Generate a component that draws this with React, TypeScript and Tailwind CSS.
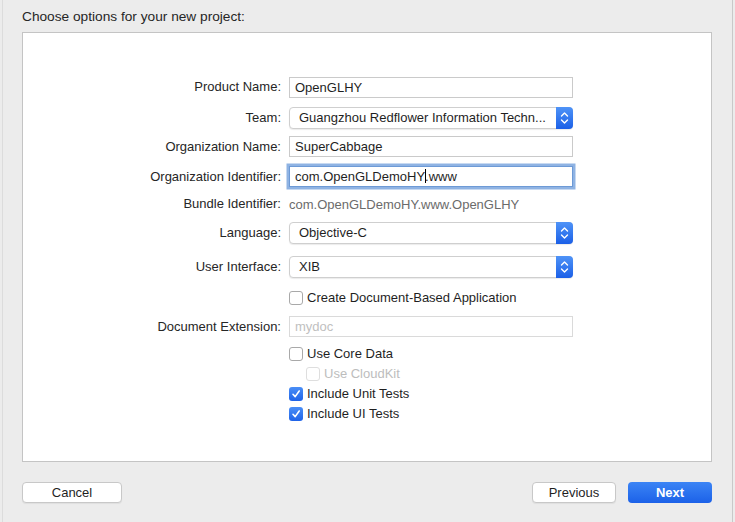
const labelCls = "w-[266px] shrink-0 pr-[8px] text-right text-[13px] text-[#262626]";

function Stepper() {
  return (
    <div className="flex h-full w-[17px] items-center justify-center rounded-r-[4px] bg-gradient-to-b from-[#4f93f7] to-[#1b5fe7]">
      <svg width="9" height="14" viewBox="0 0 9 14" fill="none">
        <path d="M1.5 5 L4.5 2 L7.5 5" stroke="white" strokeWidth="1.4" strokeLinecap="round" strokeLinejoin="round" />
        <path d="M1.5 9 L4.5 12 L7.5 9" stroke="white" strokeWidth="1.4" strokeLinecap="round" strokeLinejoin="round" />
      </svg>
    </div>
  );
}

function Popup({ value }: { value: string }) {
  return (
    <div className="flex h-[22px] w-[284px] items-center rounded-[4px] border border-[#cfcfcf] bg-white shadow-[0_1px_1px_rgba(0,0,0,0.08)]">
      <span className="flex-1 truncate pl-[9px] text-[13px] text-[#1f1f1f]">{value}</span>
      <div className="-mr-px -my-px h-[22px]">
        <Stepper />
      </div>
    </div>
  );
}

function Field({ value, placeholder, focused }: { value?: string; placeholder?: string; focused?: boolean }) {
  return (
    <div
      className={
        "flex h-[21px] w-[284px] items-center border bg-white pl-[5px] text-[13px] " +
        (focused
          ? "border-[#6d9ad6] ring-[2.5px] ring-[#8fb3e3] text-[#1f1f1f]"
          : placeholder
            ? "border-[#dadada] text-[#c0c0c0]"
            : "border-[#cacaca] text-[#1f1f1f]")
      }
    >
      {focused ? (
        <span>
          com.OpenGLDemoHY<span className="-mr-px inline-block h-[14px] w-0 border-l border-black align-[-2px]" />.www
        </span>
      ) : (
        value ?? placeholder
      )}
    </div>
  );
}

function Check({ label, checked, disabled, indent }: { label: string; checked?: boolean; disabled?: boolean; indent?: boolean }) {
  return (
    <div className={"flex h-[20px] items-center gap-[4px] " + (indent ? "pl-[17px]" : "")}>
      {checked ? (
        <div className="flex h-[14px] w-[14px] items-center justify-center rounded-[3px] bg-gradient-to-b from-[#4a8ef6] to-[#1f63e8]">
          <svg width="10" height="10" viewBox="0 0 10 10" fill="none">
            <path d="M2 5.3 L4.2 7.6 L8.2 2" stroke="white" strokeWidth="1.6" strokeLinecap="round" strokeLinejoin="round" />
          </svg>
        </div>
      ) : (
        <div
          className={
            "h-[14px] w-[14px] rounded-[3px] border bg-white " +
            (disabled ? "border-[#dedede]" : "border-[#a9a9a9]")
          }
        />
      )}
      <span className={"text-[13px] " + (disabled ? "text-[#bdbdbd]" : "text-[#1f1f1f]")}>{label}</span>
    </div>
  );
}

function Row({ label, children, className }: { label?: string; children: React.ReactNode; className: string }) {
  return (
    <div className={"flex " + className}>
      <div className={labelCls}>{label ? label + ":" : ""}</div>
      <div>{children}</div>
    </div>
  );
}

export default function App() {
  return (
    <div className="h-[522px] w-[735px] bg-[#ececec] font-['Liberation_Sans',Arial,sans-serif]">
      <div className="ml-[2px] h-full w-[731px] border-x border-l-[#dcdcdc] border-r-[#c9c9c9] pl-[19px]">
        <div className="pt-[9px] text-[13.7px] leading-[16px] text-[#262626]">Choose options for your new project:</div>
        <div className="mt-[7px] h-[430px] w-[690px] border border-[#c4c4c4] bg-white pt-[44px]">
          <Row label="Product Name" className="h-[30px] items-start">
            <Field value="OpenGLHY" />
          </Row>
          <Row label="Team" className="h-[29px] items-start leading-[22px]">
            <Popup value="Guangzhou Redflower Information Techn..." />
          </Row>
          <Row label="Organization Name" className="h-[29px] items-start leading-[21px]">
            <Field value="SuperCabbage" />
          </Row>
          <Row label="Organization Identifier" className="h-[28px] items-start pt-[1px] leading-[21px]">
            <Field focused />
          </Row>
          <Row label="Bundle Identifier" className="h-[29px] items-start pt-[1px] leading-[20px]">
            <span className="text-[13px] text-[#6b6b6b]">com.OpenGLDemoHY.www.OpenGLHY</span>
          </Row>
          <Row label="Language" className="h-[34px] items-start leading-[22px]">
            <Popup value="Objective-C" />
          </Row>
          <Row label="User Interface" className="h-[31px] items-start leading-[22px]">
            <Popup value="XIB" />
          </Row>
          <Row className="h-[29px] items-start pt-[1px]">
            <Check label="Create Document-Based Application" />
          </Row>
          <Row label="Document Extension" className="h-[28px] items-start leading-[21px]">
            <Field placeholder="mydoc" />
          </Row>
          <Row className="items-start">
            <Check label="Use Core Data" />
          </Row>
          <Row className="items-start">
            <Check label="Use CloudKit" disabled indent />
          </Row>
          <Row className="items-start">
            <Check label="Include Unit Tests" checked />
          </Row>
          <Row className="items-start">
            <Check label="Include UI Tests" checked />
          </Row>
        </div>
        <div className="mt-[20px] flex w-[690px] items-center">
          <button className="h-[21px] w-[100px] rounded-[4px] border border-[#c8c8c8] bg-white text-[13px] text-[#1f1f1f] shadow-[0_1px_1px_rgba(0,0,0,0.06)]">
            Cancel
          </button>
          <div className="flex-1" />
          <button className="h-[21px] w-[84px] rounded-[4px] border border-[#c8c8c8] bg-white text-[13px] text-[#1f1f1f] shadow-[0_1px_1px_rgba(0,0,0,0.06)]">
            Previous
          </button>
          <button className="ml-[12px] h-[21px] w-[84px] rounded-[4px] bg-gradient-to-b from-[#3b84f5] to-[#1c61e8] text-[13px] font-semibold text-white">
            Next
          </button>
        </div>
      </div>
    </div>
  );
}
